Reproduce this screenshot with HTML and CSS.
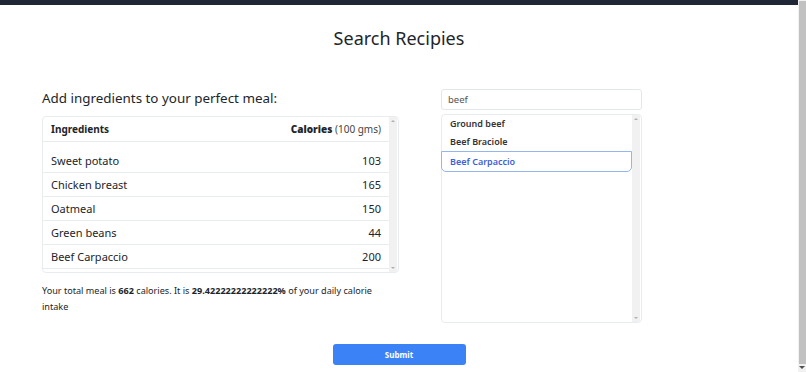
FILE: index.html
```html
<!DOCTYPE html>
<html lang="en">
<head>
  <meta charset="UTF-8">
  <title>Search Recipies</title>
  <link rel="stylesheet" href="styles.css">
</head>
<body>
  <div class="page">
    <div class="topbar"></div>
    <h1 class="page-title">Search Recipies</h1>
    <div class="layout">
      <div class="meal">
        <div class="meal-heading">Add ingredients to your perfect meal:</div>
        <div class="table-box">
          <table class="ingredients">
            <thead>
              <tr><th>Ingredients</th><th class="cal"><b>Calories</b> <span class="unit">(100 gms)</span></th></tr>
            </thead>
            <tbody>
              <tr class="spacer"><td></td><td></td></tr>
              <tr><td>Sweet potato</td><td class="cal">103</td></tr>
              <tr><td>Chicken breast</td><td class="cal">165</td></tr>
              <tr><td>Oatmeal</td><td class="cal">150</td></tr>
              <tr><td>Green beans</td><td class="cal">44</td></tr>
              <tr><td>Beef Carpaccio</td><td class="cal">200</td></tr>
            </tbody>
          </table>
          <div class="scrollbar"><span class="arrow up"></span><span class="arrow down"></span></div>
        </div>
        <p class="total">Your total meal is <b>662</b> calories. It is <b>29.42222222222222%</b> of your daily calorie intake</p>
      </div>
      <div class="search">
        <input class="search-input" type="text" value="beef">
        <div class="results-box">
          <ul class="results">
            <li>Ground beef</li>
            <li>Beef Braciole</li>
            <li class="selected">Beef Carpaccio</li>
          </ul>
          <div class="scrollbar"><span class="arrow up"></span><span class="arrow down"></span></div>
        </div>
      </div>
    </div>
    <div class="actions">
      <button class="submit-btn">Submit</button>
    </div>
  </div>
  <div class="page-scrollbar">
    <div class="thumb"></div>
    <span class="arrow down"></span>
  </div>
</body>
</html>
```

FILE: styles.css
```css
body {
  font-family: "Noto Sans", "Open Sans", Arial, sans-serif;
  color: #212529;
  background: #fff;
  margin: 0;
  padding: 0;
  display: flex;
  height: 372px;
  overflow: hidden;
}
.page {
  flex: 1;
}
.topbar {
  height: 5px;
  background: #1f2636;
}
.page-title {
  font-size: 18px;
  font-weight: 400;
  text-align: center;
  margin: 21px 0 0 0;
  line-height: 24px;
}
.layout {
  display: grid;
  grid-template-columns: 357px 201px;
  column-gap: 42px;
  padding: 39px 0 0 42px;
}
.meal-heading {
  font-size: 13.4px;
  line-height: 18px;
  margin: 0 0 9px 0;
}
.table-box {
  display: flex;
  height: 155px;
  border: 1px solid #e9ecef;
  border-radius: 4px;
}
.ingredients {
  flex: 1;
  align-self: flex-start;
  border-collapse: collapse;
  font-size: 11px;
}
.ingredients th,
.ingredients td {
  text-align: left;
  padding: 0 8px;
  height: 23px;
  border-bottom: 1px solid #e9ecef;
}
.ingredients th {
  height: 24px;
  font-size: 10px;
  font-weight: 700;
}
.ingredients .cal {
  text-align: right;
}
.ingredients .unit {
  font-weight: 400;
  color: #444;
}
.ingredients tr.spacer td {
  height: 7px;
  border-bottom: none;
}
.scrollbar {
  width: 8px;
  margin-right: 1px;
  background: #f1f1f1;
  display: flex;
  flex-direction: column;
  justify-content: space-between;
  align-items: center;
  padding: 3px 0;
}
.arrow {
  width: 0;
  height: 0;
  border-left: 2px solid transparent;
  border-right: 2px solid transparent;
}
.arrow.up {
  border-bottom: 2px solid #b0b0b0;
}
.arrow.down {
  border-top: 2px solid #b0b0b0;
}
.total {
  font-size: 9.1px;
  line-height: 16px;
  margin: 10px 0 0 0;
  width: 357px;
}
.search-input {
  display: block;
  box-sizing: border-box;
  width: 201px;
  height: 21px;
  border: 1px solid #e3e6ea;
  border-radius: 3px;
  padding: 0 6px;
  font-family: inherit;
  font-size: 9.5px;
  color: #555;
  outline: none;
}
.results-box {
  display: flex;
  margin-top: 4px;
  height: 207px;
  border: 1px solid #e9ecef;
  border-radius: 4px;
}
.results {
  flex: 1;
  list-style: none;
  margin: 0;
  padding: 0;
}
.results li {
  font-size: 9px;
  font-weight: 600;
  height: 18px;
  line-height: 18px;
  padding: 0 8px;
  color: #333;
}
.results li.selected {
  color: #3d62d6;
  border: 1px solid #93b6ee;
  border-radius: 0 0 5px 5px;
  height: 19px;
  line-height: 19px;
  padding: 0 8px;
  margin-left: -1px;
}
.actions {
  display: flex;
  justify-content: center;
  padding-top: 21px;
}
.submit-btn {
  width: 133px;
  height: 21px;
  background: #3b82f6;
  color: #fff;
  border: none;
  border-radius: 3px;
  font-family: inherit;
  font-size: 8px;
  font-weight: 700;
}
.page-scrollbar {
  width: 8px;
  height: 372px;
  background: #f1f1f1;
  display: flex;
  flex-direction: column;
  align-items: center;
  padding: 1px 0 0 0;
  box-sizing: border-box;
}
.page-scrollbar .thumb {
  width: 7px;
  height: 363px;
  background: #c1c1c1;
}
.page-scrollbar .arrow.down {
  margin-top: 2px;
  border-left-width: 3px;
  border-right-width: 3px;
  border-top: 3px solid #505050;
}
```
